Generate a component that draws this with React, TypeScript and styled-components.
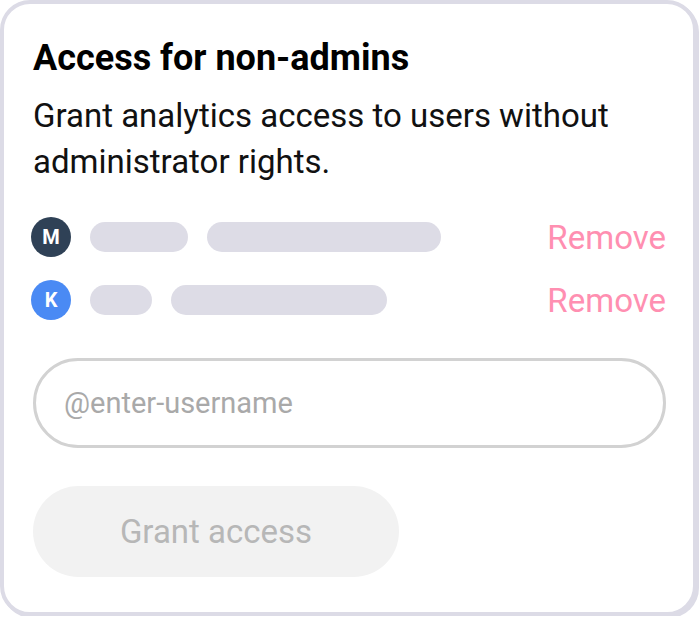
import React, { useState } from "react";
import styled, { createGlobalStyle } from "styled-components";

const GlobalStyle = createGlobalStyle`
  html, body {
    margin: 0;
    padding: 0;
    background: #ffffff;
  }
  body {
    font-family: Roboto, "Liberation Sans", sans-serif;
  }
  * {
    box-sizing: border-box;
  }
`;

const Card = styled.div`
  width: 697px;
  height: 616px;
  border: 4px solid #dcdbe6;
  box-shadow: 2px 2px 0 0 #dcdbe6;
  border-radius: 30px;
  background: #ffffff;
  padding: 33px 27px 0 29px;
  display: flex;
  flex-flow: column nowrap;
`;

const Title = styled.h2`
  margin: 0;
  font-size: 36px;
  line-height: 42px;
  font-weight: 700;
  color: #000000;
`;

const Description = styled.p`
  margin: 14px 0 0 0;
  font-size: 33px;
  line-height: 46px;
  color: #111111;
`;

const UserList = styled.div`
  display: flex;
  flex-flow: column nowrap;
  gap: 23px;
  margin-top: 32px;
`;

const UserRow = styled.div`
  display: flex;
  align-items: center;
  height: 40px;
`;

const Avatar = styled.div<{ $color: string }>`
  width: 40px;
  height: 40px;
  margin-left: -2px;
  border-radius: 50%;
  background: ${(p) => p.$color};
  color: #ffffff;
  font-size: 20px;
  font-weight: 700;
  display: flex;
  align-items: center;
  justify-content: center;
  flex-shrink: 0;
`;

const Bars = styled.div`
  display: flex;
  align-items: center;
  gap: 19px;
  margin-left: 19px;
  flex: 1;
`;

const Bar = styled.div<{ $width: number }>`
  width: ${(p) => p.$width}px;
  height: 30px;
  border-radius: 15px;
  background: #dddce6;
`;

const RemoveButton = styled.button`
  border: none;
  background: none;
  padding: 0;
  font-family: inherit;
  font-size: 33px;
  color: #ff8fb1;
  cursor: pointer;
`;

const UsernameInput = styled.input`
  margin-top: 38px;
  width: 100%;
  height: 90px;
  border: 3px solid #d2d2d2;
  border-radius: 45px;
  padding: 0 28px;
  font-family: inherit;
  font-size: 29px;
  color: #333333;
  outline: none;
  &::placeholder {
    color: #a9a9a9;
  }
`;

const GrantButton = styled.button`
  margin-top: 38px;
  width: 366px;
  height: 91px;
  border: none;
  border-radius: 46px;
  background: #f2f2f2;
  color: #b7b7b7;
  font-family: inherit;
  font-size: 33px;
`;

const users = [
  { initial: "M", color: "#2f4156", bars: [98, 234] },
  { initial: "K", color: "#4a8af4", bars: [62, 216] },
];

const App = () => {
  const [value, setValue] = useState("");

  return (
    <>
      <GlobalStyle />
      <Card>
        <Title>Access for non-admins</Title>
        <Description>
          Grant analytics access to users without administrator rights.
        </Description>
        <UserList>
          {users.map((u) => (
            <UserRow key={u.initial}>
              <Avatar $color={u.color}>{u.initial}</Avatar>
              <Bars>
                {u.bars.map((w, i) => (
                  <Bar key={i} $width={w} />
                ))}
              </Bars>
              <RemoveButton>Remove</RemoveButton>
            </UserRow>
          ))}
        </UserList>
        <UsernameInput
          type="text"
          placeholder="@enter-username"
          value={value}
          onChange={(e) => setValue(e.target.value)}
        />
        <GrantButton disabled>Grant access</GrantButton>
      </Card>
    </>
  );
};

export default App;
